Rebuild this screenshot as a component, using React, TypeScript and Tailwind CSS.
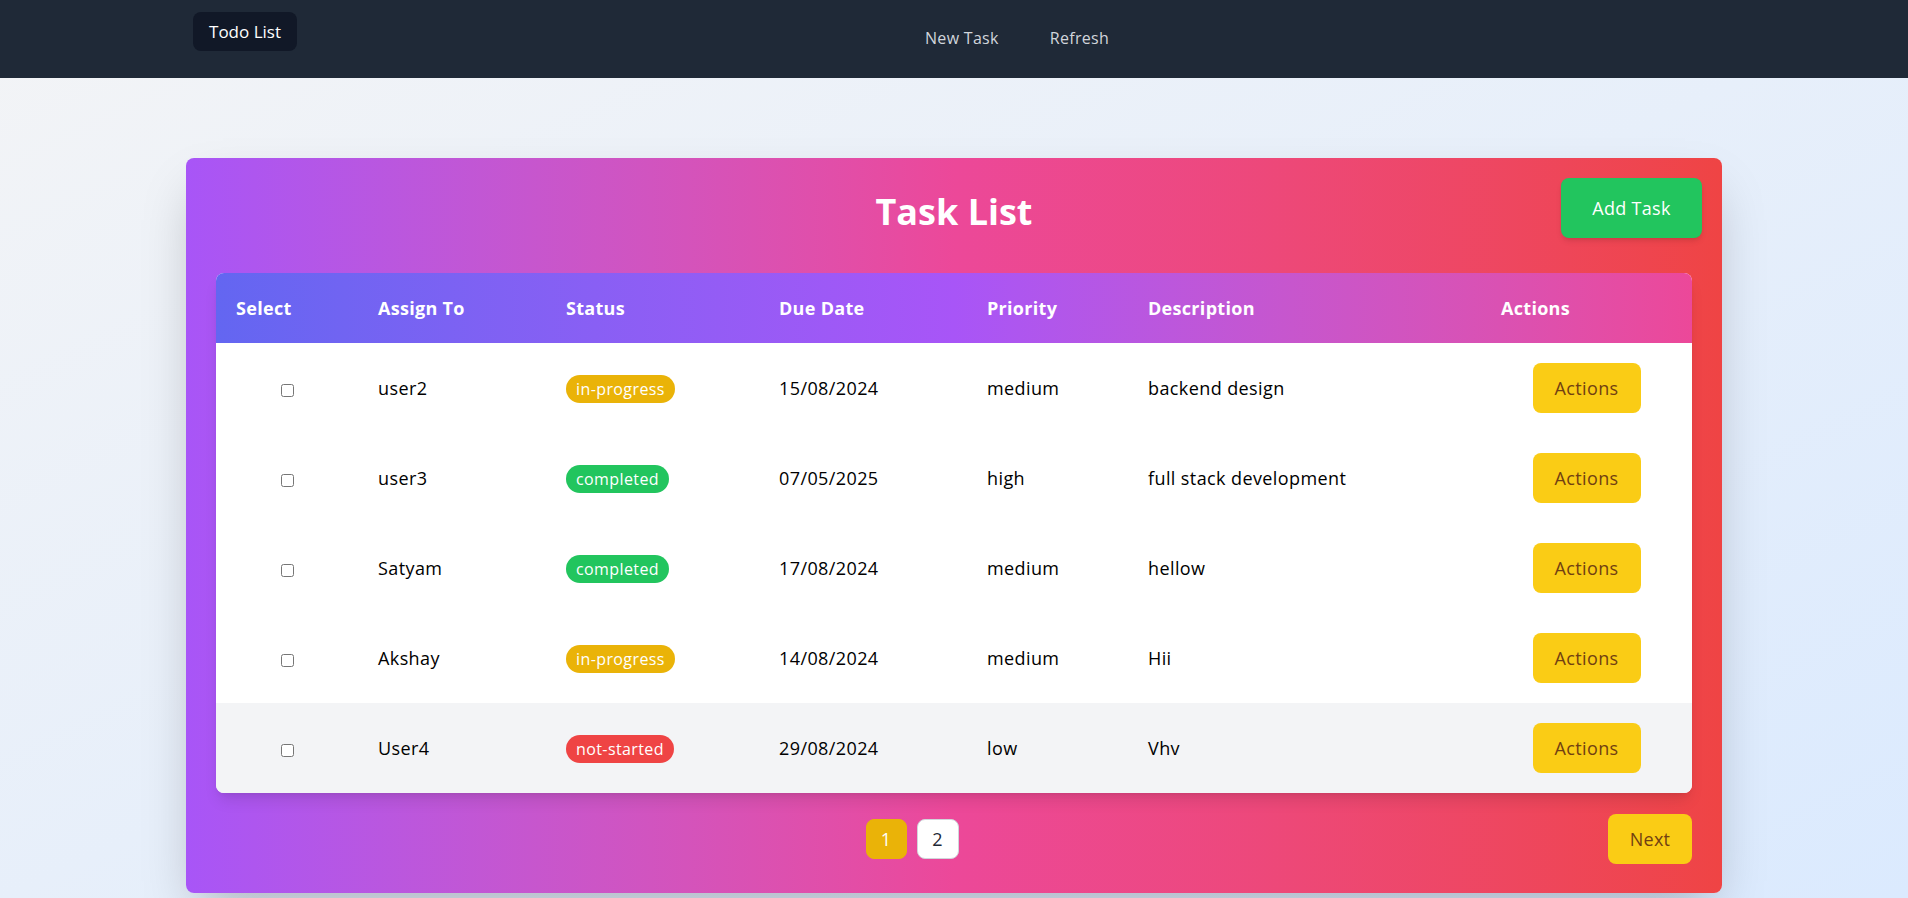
const tasks = [
  { user: 'user2', status: 'in-progress', due: '15/08/2024', priority: 'medium', description: 'backend design' },
  { user: 'user3', status: 'completed', due: '07/05/2025', priority: 'high', description: 'full stack development' },
  { user: 'Satyam', status: 'completed', due: '17/08/2024', priority: 'medium', description: 'hellow' },
  { user: 'Akshay', status: 'in-progress', due: '14/08/2024', priority: 'medium', description: 'Hii' },
  { user: 'User4', status: 'not-started', due: '29/08/2024', priority: 'low', description: 'Vhv' },
];

const statusColor: Record<string, string> = {
  'in-progress': 'bg-[#eab308]',
  completed: 'bg-[#22c55e]',
  'not-started': 'bg-[#ef4444]',
};

const headers = ['Select', 'Assign To', 'Status', 'Due Date', 'Priority', 'Description', 'Actions'];

export default function App() {
  return (
    <div className="min-h-screen bg-linear-to-br from-[#f3f4f6] to-[#dbeafe] font-['Open_Sans',sans-serif]">
      {/* Navbar */}
      <nav className="bg-[#1f2937] h-[78px]">
        <div className="mx-auto w-[1536px] px-[7px] pt-3 flex items-start">
          <a className="w-[104px] h-[39px] flex items-center justify-center bg-[#111827] text-white text-[17px] font-medium rounded-lg">
            Todo List
          </a>
          <div className="ml-[628px] mt-[14px] flex gap-[51px] text-[#d1d5db] font-medium leading-6 tracking-[0.3px]">
            <a>New Task</a>
            <a>Refresh</a>
          </div>
        </div>
      </nav>

      {/* Main */}
      <main className="pt-20 pb-[6px]">
        <div className="relative mx-auto w-[1536px] rounded-lg bg-linear-to-r from-[#a855f7] via-[#ec4899] to-[#ef4444] shadow-2xl px-[30px] pt-5 pb-[29px]">
          <div className="flex items-center justify-center h-[68px] mb-[27px]">
            <h1 className="text-4xl font-bold text-white">Task List</h1>
          </div>
          <button className="absolute top-5 right-5 w-[141px] bg-[#22c55e] text-white text-lg leading-7 py-4 rounded-lg shadow-md tracking-[0.3px]">
            Add Task
          </button>

          {/* Table */}
          <div className="bg-white rounded-lg shadow-lg overflow-hidden">
            <table className="w-full table-fixed border-collapse">
              <colgroup>
                <col className="w-[142px]" />
                <col className="w-[188px]" />
                <col className="w-[213px]" />
                <col className="w-[208px]" />
                <col className="w-[161px]" />
                <col className="w-[353px]" />
                <col className="w-[211px]" />
              </colgroup>
              <thead>
                <tr className="bg-linear-to-r from-[#6366f1] via-[#a855f7] to-[#ec4899]">
                  {headers.map((h) => (
                    <th key={h} className="px-5 py-5 text-left text-lg font-bold leading-[30px] text-white tracking-[0.3px]">
                      {h}
                    </th>
                  ))}
                </tr>
              </thead>
              <tbody className="text-lg text-black tracking-[0.4px]">
                {tasks.map((t, i) => (
                  <tr key={t.user} className={i === tasks.length - 1 ? 'bg-[#f3f4f6]' : 'bg-white'}>
                    <td className="px-5 py-5 text-center">
                      <input type="checkbox" className="m-0 align-middle" />
                    </td>
                    <td className="px-5 py-5">{t.user}</td>
                    <td className="px-5 py-5">
                      <span className={`inline-block rounded-full px-2.5 py-0.5 text-base leading-6 text-white ${statusColor[t.status]}`}>
                        {t.status}
                      </span>
                    </td>
                    <td className="px-5 py-5">{t.due}</td>
                    <td className="px-5 py-5">{t.priority}</td>
                    <td className="px-5 py-5">{t.description}</td>
                    <td className="px-5 py-5 text-center">
                      <button className="w-[108px] bg-[#facc15] text-[#713f12] text-lg leading-[26px] py-3 rounded-lg">
                        Actions
                      </button>
                    </td>
                  </tr>
                ))}
              </tbody>
            </table>
          </div>

          {/* Pagination */}
          <div className="mt-[21px] flex items-center justify-between">
            <div />
            <div className="flex gap-2.5">
              <button className="w-[41px] border border-[#eab308] bg-[#eab308] text-white text-lg leading-7 py-[5px] rounded-lg">
                1
              </button>
              <button className="w-[42px] border border-[#d1d5db] bg-white text-[#1f2937] text-lg leading-7 py-[5px] rounded-lg">
                2
              </button>
            </div>
            <button className="w-[84px] bg-[#facc15] text-[#713f12] text-lg leading-[26px] py-3 rounded-lg tracking-[0.3px]">
              Next
            </button>
          </div>
        </div>
      </main>
    </div>
  );
}
